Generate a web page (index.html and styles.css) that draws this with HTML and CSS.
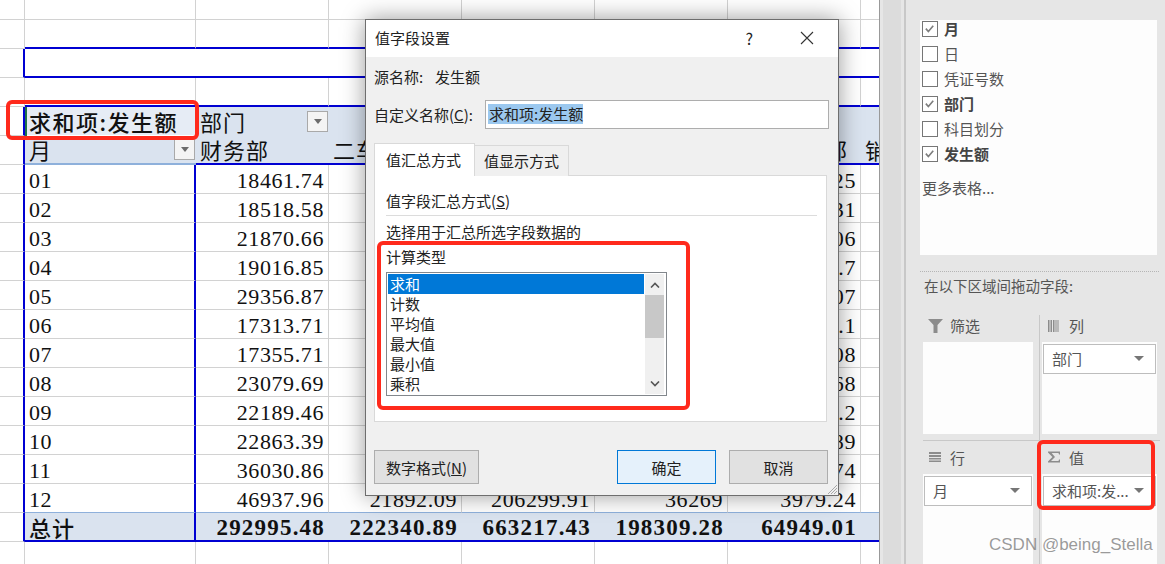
FILE: index.html
```html
<!DOCTYPE html>
<html lang="zh-CN">
<head>
    <meta charset="UTF-8">
    <meta name="viewport" content="width=device-width, initial-scale=1.0">
    <title>值字段设置</title>
    <link rel="stylesheet" href="styles.css">
</head>
<body>

<div class="sheet">
    <table class="grid">
        <colgroup>
            <col class="col-gutter"><col class="col-first">
            <col class="col-num"><col class="col-num"><col class="col-num"><col class="col-num"><col class="col-num"><col class="col-num">
        </colgroup>
        <tr class="row-top"><td></td><td></td><td></td><td></td><td></td><td></td><td></td><td></td></tr>
        <tr class="row-above"><td></td><td></td><td></td><td></td><td></td><td></td><td></td><td></td></tr>
        <tr><td class="box-left"></td><td class="box" colspan="7"></td></tr>
        <tr class="row-above"><td></td><td></td><td></td><td></td><td></td><td></td><td></td><td></td></tr>
        <tr class="head">
            <td class="plain"></td>
            <td class="selected">求和项:发生额</td>
            <td><div class="head-cell">部门<span class="drop"></span></div></td>
            <td></td><td></td><td></td><td></td><td></td>
        </tr>
        <tr class="head head-end">
            <td class="plain"></td>
            <td class="month-head"><div class="head-cell">月<span class="drop"></span></div></td>
            <td>财务部</td><td>二车间</td><td></td><td></td><td class="dept-end">部</td><td>销售部</td>
        </tr>
        <tr class="data"><td class="plain"></td><td class="name">01</td><td>18461.74</td><td></td><td></td><td></td><td>25</td><td></td></tr>
        <tr class="data"><td class="plain"></td><td class="name">02</td><td>18518.58</td><td></td><td></td><td></td><td>31</td><td></td></tr>
        <tr class="data"><td class="plain"></td><td class="name">03</td><td>21870.66</td><td></td><td></td><td></td><td>06</td><td></td></tr>
        <tr class="data"><td class="plain"></td><td class="name">04</td><td>19016.85</td><td></td><td></td><td></td><td>.7</td><td></td></tr>
        <tr class="data"><td class="plain"></td><td class="name">05</td><td>29356.87</td><td></td><td></td><td></td><td>07</td><td></td></tr>
        <tr class="data"><td class="plain"></td><td class="name">06</td><td>17313.71</td><td></td><td></td><td></td><td>.1</td><td></td></tr>
        <tr class="data"><td class="plain"></td><td class="name">07</td><td>17355.71</td><td></td><td></td><td></td><td>08</td><td></td></tr>
        <tr class="data"><td class="plain"></td><td class="name">08</td><td>23079.69</td><td></td><td></td><td></td><td>68</td><td></td></tr>
        <tr class="data"><td class="plain"></td><td class="name">09</td><td>22189.46</td><td></td><td></td><td></td><td>.2</td><td></td></tr>
        <tr class="data"><td class="plain"></td><td class="name">10</td><td>22863.39</td><td></td><td></td><td></td><td>89</td><td></td></tr>
        <tr class="data"><td class="plain"></td><td class="name">11</td><td>36030.86</td><td></td><td></td><td></td><td>74</td><td></td></tr>
        <tr class="data data-last"><td class="plain"></td><td class="name">12</td><td>46937.96</td><td>21892.09</td><td>206299.91</td><td>36269</td><td>3979.24</td><td></td></tr>
        <tr class="data total"><td class="plain"></td><td class="name">总计</td><td>292995.48</td><td>222340.89</td><td>663217.43</td><td>198309.28</td><td>64949.01</td><td></td></tr>
        <tr class="row-above"><td></td><td></td><td></td><td></td><td></td><td></td><td></td><td></td></tr>
    </table>
</div>

<div class="gutter"></div>

<aside class="panel">
    <div class="fields">
        <div class="field on"><span class="check"><svg viewBox="0 0 16 16"><path d="M3.5 8.2 6.6 11.6 12.6 4.6"/></svg></span>月</div>
        <div class="field"><span class="check"></span>日</div>
        <div class="field"><span class="check"></span>凭证号数</div>
        <div class="field on"><span class="check"><svg viewBox="0 0 16 16"><path d="M3.5 8.2 6.6 11.6 12.6 4.6"/></svg></span>部门</div>
        <div class="field"><span class="check"></span>科目划分</div>
        <div class="field on"><span class="check"><svg viewBox="0 0 16 16"><path d="M3.5 8.2 6.6 11.6 12.6 4.6"/></svg></span>发生额</div>
        <div class="more">更多表格...</div>
    </div>
    <div class="drag-title">在以下区域间拖动字段:</div>
    <div class="zones">
        <div class="zone">
            <div class="zone-head">
                <svg class="zone-icon" width="15" height="14" viewBox="0 0 15 14"><path d="M0 0H15L9.5 6V14H5.5V6Z"/></svg>筛选
            </div>
            <div class="zone-body"></div>
        </div>
        <div class="zone zone-right">
            <div class="zone-head">
                <svg class="zone-icon" width="15" height="14" viewBox="0 0 15 14"><path d="M0 1H1.5V13H0ZM2.5 1H4V13H2.5ZM5 1H6.5V13H5ZM7.5 1H8.5V13H7.5ZM9.5 1H10.5V13H9.5Z"/></svg>列
            </div>
            <div class="zone-body">
                <div class="pill">部门<span class="pill-arrow"></span></div>
            </div>
        </div>
        <div class="zone zone-low">
            <div class="zone-head">
                <svg class="zone-icon" width="15" height="14" viewBox="0 0 15 14"><path d="M1 2H13V4H1ZM1 5H13V7H1ZM1 8H13V9.5H1ZM1 10.5H13V12H1Z"/></svg>行
            </div>
            <div class="zone-body">
                <div class="pill">月<span class="pill-arrow"></span></div>
            </div>
        </div>
        <div class="zone zone-right zone-low">
            <div class="zone-head">
                <svg class="zone-icon" width="15" height="14" viewBox="0 0 15 14"><path d="M0 1.5H12V4.5H11L10.5 3H3.6L7 7 3 11H10.5L11 9.5H12V12.5H0V11.6L4.4 7 0 2.4Z"/></svg>值
            </div>
            <div class="zone-body">
                <div class="pill">求和项:发...<span class="pill-arrow"></span></div>
            </div>
        </div>
    </div>
</aside>

<div class="dialog">
    <div class="title-bar">
        <span class="title">值字段设置</span>
        <span class="help">?</span>
        <svg class="close" width="14" height="14" viewBox="0 0 14 14"><path d="M1 1 13 13M13 1 1 13"/></svg>
    </div>
    <div class="dialog-body">
        <div class="source"><span class="source-label">源名称:</span>发生额</div>
        <div class="name-row">
            <label class="name-label">自定义名称(<u>C</u>):</label>
            <div class="name-input"><span class="name-sel">求和项:发生额</span></div>
        </div>
        <div class="tabs">
            <div class="tab active">值汇总方式</div>
            <div class="tab">值显示方式</div>
        </div>
        <div class="tab-panel">
            <div class="section-title">值字段汇总方式(<u>S</u>)</div>
            <div class="divider"></div>
            <div class="hint">选择用于汇总所选字段数据的</div>
            <div class="hint-2">计算类型</div>
            <div class="listbox">
                <ul class="list-items">
                    <li class="current">求和</li>
                    <li>计数</li>
                    <li>平均值</li>
                    <li>最大值</li>
                    <li>最小值</li>
                    <li>乘积</li>
                </ul>
                <div class="scrollbar">
                    <div class="scroll-btn"><svg width="10" height="6" viewBox="0 0 10 6"><path d="M1 5.5 5 1.5 9 5.5"/></svg></div>
                    <div class="scroll-thumb"></div>
                    <div class="scroll-track"></div>
                    <div class="scroll-btn"><svg width="10" height="6" viewBox="0 0 10 6"><path d="M1 .5 5 4.5 9 .5"/></svg></div>
                </div>
            </div>
        </div>
        <div class="buttons">
            <button class="btn btn-format" type="button">数字格式(<u>N</u>)</button>
            <button class="btn btn-ok" type="button">确定</button>
            <button class="btn" type="button">取消</button>
        </div>
    </div>
    <svg class="grip" width="11" height="11" viewBox="0 0 11 11"><path d="M1 10 10 1M4 10 10 4M7 10 10 7"/></svg>
</div>

<div class="mark mark-head"></div>
<div class="mark mark-list"></div>
<div class="mark mark-value"></div>
<div class="watermark">CSDN @being_Stella</div>

</body>
</html>
```

FILE: styles.css
```css
* {
    box-sizing: border-box;
}

html, body {
    height: 564px;
    overflow: hidden;
}

body {
    margin: 0;
    display: flex;
    position: relative;
    background-color: #e6e6e6;
    font-family: "Noto Sans CJK SC", sans-serif;
    font-size: 15px;
}

/* spreadsheet */

.sheet {
    width: 880px;
    height: 564px;
    overflow: hidden;
    flex: none;
    background-color: #fff;
    border-right: 1px solid #999;
}

.grid {
    border-collapse: separate;
    border-spacing: 0;
    table-layout: fixed;
    width: 994px;
    font-family: "Liberation Serif", "Noto Sans CJK SC", serif;
    font-size: 22px;
    letter-spacing: .6px;
    color: #111;
}

.col-gutter { width: 25px; }
.col-first { width: 171px; }
.col-num { width: 133px; }

.grid td {
    height: 29px;
    padding: 0 4px;
    white-space: nowrap;
    border-right: 1px solid #d2d2d2;
    border-bottom: 1px solid #d2d2d2;
    line-height: 26px;
}

.row-top td { height: 20px; }

.grid .box-left {
    border-right: 2px solid #0000d2;
}

.grid .box {
    border-right: none;
    border-bottom: 2px solid #0000d2;
}

.grid tr:nth-child(2) td { border-bottom: 2px solid #0000d2; }
.grid tr:nth-child(2) td:first-child { border-bottom: 1px solid #d2d2d2; }
.grid tr:nth-child(4) td { border-bottom: 2px solid #0000d2; }
.grid tr:nth-child(4) td:first-child { border-bottom: 1px solid #d2d2d2; }

.grid .plain {
    border-right: 2px solid #0000d2;
}

.head td {
    background-color: #dae3ef;
    border-right: none;
    border-bottom: none;
    font-family: "Noto Sans CJK SC", sans-serif;
    letter-spacing: 1px;
    line-height: 27px;
}

.head td.plain {
    background-color: #fff;
    border-right: 2px solid #0000d2;
    border-bottom: 1px solid #d2d2d2;
}

.head td.selected {
    background-color: #e6ecf5;
    box-shadow: inset 2px 0 0 #217346, inset -1px -1px 0 #fff;
    font-weight: 500;
    letter-spacing: 1.5px;
}

.head-end td {
    border-bottom: 2px solid #0000d2;
}

.head-end td.month-head {
    border-bottom: 2px solid #8eb0db;
}

.head-end td.dept-end {
    text-align: right;
    padding-right: 13px;
}

.head-cell {
    display: flex;
    justify-content: space-between;
    align-items: center;
    margin-right: -4px;
}

.drop {
    width: 21px;
    height: 21px;
    flex: none;
    display: flex;
    align-items: center;
    justify-content: center;
    background-color: #f4f4f4;
    border: 1px solid #a9a9a9;
    margin-right: 1px;
}

.drop::after {
    content: "";
    border-left: 4px solid transparent;
    border-right: 4px solid transparent;
    border-top: 5px solid #6c6c6c;
}

.data td {
    padding-top: 4px;
    line-height: 24px;
    text-align: right;
}

.data td.plain {
    text-align: left;
}

.data td.name {
    text-align: left;
    border-right: 2px solid #0000d2;
}

.data-last td {
    border-bottom-color: #8eb0db;
}

.data-last td.plain {
    border-bottom-color: #d2d2d2;
}

.total td {
    padding-top: 2px;
    background-color: #dae3ef;
    font-size: 23px;
    font-weight: bold;
    letter-spacing: 1.2px;
    border-right: none;
    border-bottom: 2px solid #0000d2;
}

.total td.plain {
    background-color: #fff;
    border-bottom: 1px solid #d2d2d2;
}

.total td.name {
    padding-top: 0;
    font-family: "Noto Sans CJK SC", sans-serif;
    font-size: 22px;
    font-weight: 500;
    letter-spacing: 1px;
}

/* gutter and pivot panel */

.gutter {
    width: 22px;
    flex: none;
    margin-left: 3px;
    background-color: #dcdcdc;
    border-right: 4px solid #e6e6e6;
}

.panel {
    flex: 1;
    min-width: 0;
    border-left: 2px solid #c8c8c8;
    margin-left: -1px;
    padding-top: 20px;
    color: #555;
}

.fields {
    width: 237px;
    height: 235px;
    margin-left: 14px;
    padding: 1px 2px 0;
    background-color: #fdfdfd;
}

.field {
    display: flex;
    align-items: center;
    height: 25px;
    padding-bottom: 9px;
    line-height: 16px;
}

.field.on {
    font-weight: 700;
    color: #444;
}

.check {
    width: 16px;
    height: 16px;
    flex: none;
    margin-right: 6px;
    border: 1.5px solid #767676;
    background-color: #fff;
}

.check svg {
    display: block;
    width: 13px;
    height: 13px;
    fill: none;
    stroke: #7d7d7d;
    stroke-width: 2;
}

.more {
    margin-top: 6px;
    line-height: 22px;
    color: #555;
}

.drag-title {
    margin: 16px 6px 0 14px;
    padding: 4px 4px 0;
    border-top: 1px dotted #b5b5b5;
    line-height: 20px;
    font-size: 14.5px;
}

.zones {
    display: grid;
    grid-template-columns: 117px 120px;
    margin: 19px 0 0 17px;
}

.zone {
    height: 125px;
    border-right: 1px solid #c8c8c8;
}

.zone-right {
    border-right: none;
    padding-left: 2px;
}

.zone-low {
    height: 124px;
    border-top: 1px solid #c8c8c8;
    padding-top: 5px;
}

.zone-head {
    height: 27px;
    display: flex;
    align-items: center;
    padding: 0 0 6px 5px;
    font-size: 15px;
}

.zone-low .zone-head {
    height: 28px;
}

.zone-icon {
    margin-right: 7px;
    fill: #8c8c8c;
}

.zone-right .zone-head {
    padding-left: 6px;
}

.zone-right .zone-icon {
    margin-right: 6px;
}

.zone-body {
    width: 110px;
    height: 92px;
    padding: 2px 1px;
    background-color: #fdfdfd;
}

.zone-right .zone-body {
    width: 115px;
}

.pill {
    display: flex;
    align-items: center;
    justify-content: space-between;
    height: 30px;
    padding: 0 11px 2px 8px;
    background-color: #fff;
    border: 1px solid #bdbdbd;
    font-size: 15px;
    white-space: nowrap;
}

.pill-arrow {
    border-left: 5px solid transparent;
    border-right: 5px solid transparent;
    border-top: 5px solid #767676;
}

/* dialog */

.dialog {
    position: absolute;
    left: 365px;
    top: 19px;
    width: 474px;
    height: 477px;
    background-color: #f0f0f0;
    border: 1px solid #6e6e6e;
    box-shadow: 0 0 22px rgba(0, 0, 0, .4);
    color: #222;
}

.title-bar {
    display: flex;
    align-items: center;
    height: 37px;
    padding: 0 0 2px 9px;
    background-color: #fff;
}

.title {
    flex: 1;
}

.help {
    margin-right: 47px;
    font-size: 16px;
}

.close {
    margin-right: 24px;
    fill: none;
    stroke: #333;
    stroke-width: 1.1;
}

.dialog-body {
    padding: 10px 10px 0 8px;
}

.source {
    display: flex;
    line-height: 20px;
}

.source-label {
    width: 61px;
}

.name-row {
    display: flex;
    align-items: center;
    margin-top: 13px;
}

.name-label {
    width: 111px;
    flex: none;
}

.name-input {
    width: 344px;
    height: 29px;
    flex: none;
    padding: 2px;
    background-color: #fff;
    border: 1px solid #adadad;
}

.name-sel {
    display: inline-block;
    line-height: 20px;
    padding-left: 1px;
    background-color: #9bc8ef;
}

.tabs {
    display: flex;
    align-items: flex-end;
    height: 33px;
    margin-top: 14px;
    position: relative;
    z-index: 1;
}

.tab {
    height: 31px;
    width: 94px;
    padding-left: 9px;
    line-height: 30px;
    background-color: #f0f0f0;
    border: 1px solid #d9d9d9;
    border-left: none;
    border-bottom: none;
}

.tab.active {
    height: 33px;
    width: 101px;
    padding-left: 11px;
    line-height: 32px;
    background-color: #fff;
    border-left: 1px solid #d9d9d9;
}

.tab-panel {
    width: 453px;
    height: 247px;
    margin-top: -1px;
    padding: 15px 9px 0 11px;
    background-color: #fff;
    border: 1px solid #d9d9d9;
}

.section-title, .hint, .hint-2 {
    line-height: 20px;
}

.divider {
    height: 1px;
    margin-top: 4px;
    background-color: #dcdcdc;
}

.hint {
    margin-top: 6px;
}

.hint-2 {
    margin-top: 5px;
}

.listbox {
    display: flex;
    width: 281px;
    height: 124px;
    margin-top: 5px;
    padding: 1px 2px 1px 1px;
    background-color: #fff;
    border: 1px solid #82878c;
}

.list-items {
    flex: 1;
    margin: 0;
    padding: 0 1px 0 0;
    list-style: none;
    line-height: 20px;
}

.list-items li {
    height: 20px;
    padding-left: 2px;
}

.list-items .current {
    background-color: #0078d7;
    color: #fff;
}

.scrollbar {
    width: 19px;
    display: flex;
    flex-direction: column;
    background-color: #f0f0f0;
}

.scroll-btn {
    height: 21px;
    flex: none;
    display: flex;
    align-items: center;
    justify-content: center;
}

.scroll-btn svg {
    fill: none;
    stroke: #555;
    stroke-width: 1.6;
}

.scroll-thumb {
    height: 43px;
    flex: none;
    background-color: #c8c8c8;
}

.scroll-track {
    flex: 1;
}

.buttons {
    display: flex;
    gap: 13px;
    margin-top: 28px;
}

.btn {
    width: 99px;
    height: 34px;
    padding: 0;
    background-color: #e1e1e1;
    border: 1px solid #adadad;
    font-family: inherit;
    font-size: 15px;
    color: #222;
}

.btn-format {
    width: 105px;
    margin-right: auto;
}

.btn-ok {
    background-color: #e5f1fb;
    border-color: #0078d7;
}

.grip {
    position: absolute;
    right: 0;
    bottom: 0;
    fill: none;
    stroke: #a8a8a8;
    stroke-width: 1;
}

/* red annotations */

.mark {
    position: absolute;
    border: 4px solid #ff2a1c;
    border-radius: 6px;
}

.mark-head {
    left: 6px;
    top: 100px;
    width: 193px;
    height: 40px;
}

.mark-list {
    left: 377px;
    top: 241px;
    width: 313px;
    height: 169px;
}

.mark-value {
    left: 1037px;
    top: 440px;
    width: 118px;
    height: 70px;
}

.watermark {
    position: absolute;
    left: 989px;
    top: 534px;
    font-family: "Liberation Sans", sans-serif;
    font-size: 17px;
    line-height: 22px;
    color: rgba(110, 110, 110, .7);
}
```
